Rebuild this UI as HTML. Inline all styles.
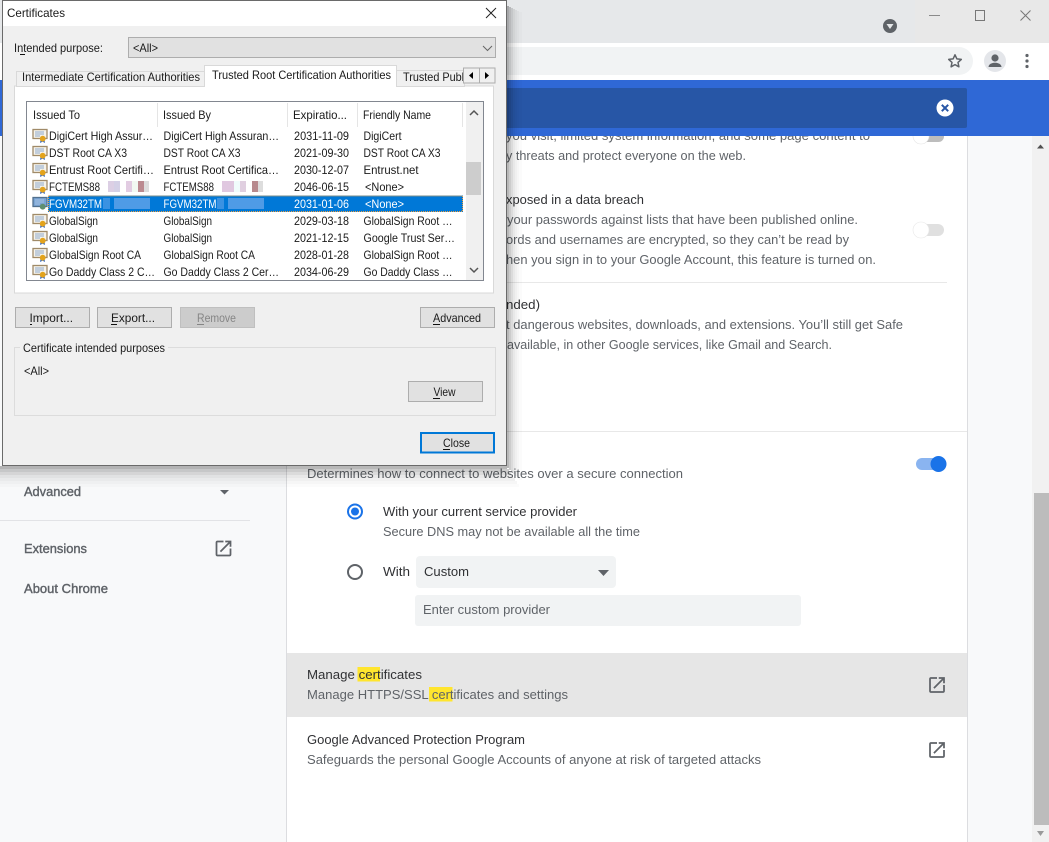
<!DOCTYPE html>
<html lang="en">
<head>
<meta charset="utf-8">
<title>Certificates</title>
<style>
html,body{margin:0;padding:0;width:1049px;height:842px;overflow:hidden;background:#f8f9fa}
svg{display:block;position:absolute;left:0;top:0}
text{white-space:pre}
.c{font:13px "Liberation Sans",sans-serif;fill:#5f6368}
.p{font:13px "Liberation Sans",sans-serif;fill:#303134}
.n{font:13px "Liberation Sans",sans-serif;fill:#5f6368;stroke:#5f6368;stroke-width:.4}
.d{font:12px "Liberation Sans",sans-serif;fill:#1a1a1a}
.w{font:12px "Liberation Sans",sans-serif;fill:#fff}
</style>
</head>
<body>
<svg width="1049" height="842" viewBox="0 0 1049 842" xmlns="http://www.w3.org/2000/svg">
<defs>
<clipPath id="tab3"><rect x="398" y="66" width="65" height="20"/></clipPath>
<g id="cert">
<rect x="33" y="-6.500" width="14" height="9" fill="#f6f3ea" stroke="#a08a68" stroke-width="1.300"/>
<path d="M35 -4h9M35 -2h9M35 0h5" stroke="#8fa8cc" stroke-width="1" fill="none"/>
<path d="M40.500 3.500l-.5 3.500 2.500-1.300L45 7l-.5-3.500z" fill="#3f6fc0"/>
<circle cx="42.700" cy="2.700" r="2.900" fill="#e3a31c"/>
</g>
<g id="certs">
<rect x="33" y="-6.500" width="14" height="9" fill="#7aa5d4" stroke="#52708e" stroke-width="1.300"/>
<path d="M35 -4h9M35 -2h9M35 0h5" stroke="#a8c4e4" stroke-width="1" fill="none"/>
<circle cx="42.700" cy="2.700" r="2.900" fill="#5f8f70"/>
</g>
<path id="ext" d="M19 19H5V5h7V3H5c-1.110 0-2 .9-2 2v14c0 1.100.89 2 2 2h14c1.100 0 2-.9 2-2v-7h-2v7zM14 3v2h3.590l-9.830 9.830 1.410 1.410L19 6.410V10h2V3h-7z" fill="#5f6368"/>
</defs>

<!-- browser chrome -->
<rect width="1049" height="842" fill="#f8f9fa"/>
<rect width="1049" height="43" fill="#e6e8ea"/>
<rect x="915" width="134" height="43" fill="#e8e8e8"/>
<circle cx="890" cy="26" r="7" fill="#5f6368"/>
<path d="M886.500 24h7L890 29z" fill="#e6e8ea"/>
<rect x="929" y="15" width="11" height="1" fill="#8a8a8a"/>
<rect x="975.500" y="10.500" width="9" height="10" fill="none" stroke="#777"/>
<path d="M1020.500 10.500l10 10M1030.500 10.500l-10 10" stroke="#777" fill="none"/>
<rect y="43" width="1049" height="37" fill="#fff"/>
<rect x="300" y="47" width="673" height="28" rx="14" fill="#f1f3f4"/>
<path d="M955 54.800l1.900 4.100 4.400.5-3.300 3 .9 4.400-3.900-2.200-3.900 2.200.9-4.400-3.300-3 4.400-.5z" fill="none" stroke="#5f6368" stroke-width="1.500" stroke-linejoin="round"/>
<circle cx="995" cy="61" r="11" fill="#e4e6ea"/>
<circle cx="995" cy="58" r="3.600" fill="#5f6368"/>
<path d="M988.500 67c0-3 3.500-4.300 6.500-4.300s6.500 1.300 6.500 4.300z" fill="#5f6368"/>
<circle cx="1027" cy="55.500" r="1.600" fill="#5f6368"/><circle cx="1027" cy="61" r="1.600" fill="#5f6368"/><circle cx="1027" cy="66.500" r="1.600" fill="#5f6368"/>

<!-- page -->
<rect x="0" y="136" width="286" height="706" fill="#f8f9fa"/>
<rect x="286" y="100" width="682" height="742" fill="#dcdde0"/>
<rect x="287" y="100" width="680" height="742" fill="#fff"/>
<rect x="1032" y="136" width="17" height="706" fill="#f1f1f1"/>
<rect x="1034" y="493" width="15" height="332" fill="#bcbcbc"/>
<path d="M1037 148.500h7l-3.500-4z" fill="#505050"/>
<path d="M1037 831h7l-3.500 5z" fill="#9a9a9a"/>

<text class="c" x="506" y="140" textLength="364" lengthAdjust="spacingAndGlyphs">you visit, limited system information, and some page content to</text>
<rect x="916" y="131" width="28" height="11" rx="5.500" fill="#bdbdbd"/>
<circle cx="921" cy="136" r="8" fill="#fff" stroke="#e4e4e4" stroke-width=".6"/>
<text class="c" x="506" y="160" textLength="240" lengthAdjust="spacingAndGlyphs">y threats and protect everyone on the web.</text>
<text class="p" x="506" y="204" textLength="138" lengthAdjust="spacingAndGlyphs">xposed in a data breach</text>
<text class="c" x="507" y="224" textLength="351" lengthAdjust="spacingAndGlyphs">your passwords against lists that have been published online.</text>
<text class="c" x="506" y="244" textLength="343" lengthAdjust="spacingAndGlyphs">ords and usernames are encrypted, so they can’t be read by</text>
<text class="c" x="506" y="264" textLength="370" lengthAdjust="spacingAndGlyphs">hen you sign in to your Google Account, this feature is turned on.</text>
<rect x="916" y="224" width="28" height="12" rx="6" fill="#e0e0e0"/>
<circle cx="921" cy="230" r="8" fill="#fff" stroke="#e8e8e8" stroke-width=".6"/>
<rect x="500" y="282" width="447" height="1" fill="#e8e8e8"/>
<text class="p" x="506" y="309" textLength="34" lengthAdjust="spacingAndGlyphs">nded)</text>
<text class="c" x="506" y="329" textLength="397" lengthAdjust="spacingAndGlyphs">t dangerous websites, downloads, and extensions. You’ll still get Safe</text>
<text class="c" x="507" y="349" textLength="325" lengthAdjust="spacingAndGlyphs">available, in other Google services, like Gmail and Search.</text>
<rect x="287" y="431" width="680" height="1" fill="#e8e8e8"/>

<text class="c" x="307" y="478" textLength="376" lengthAdjust="spacingAndGlyphs">Determines how to connect to websites over a secure connection</text>
<rect x="916" y="458" width="28" height="12" rx="6" fill="#8ab4f0"/>
<circle cx="938.500" cy="464" r="8" fill="#1a73e8"/>

<circle cx="355" cy="511.500" r="7" fill="none" stroke="#1a73e8" stroke-width="2"/>
<circle cx="355" cy="511.500" r="4" fill="#1a73e8"/>
<text class="p" x="383" y="516" textLength="194" lengthAdjust="spacingAndGlyphs">With your current service provider</text>
<text class="c" x="383" y="536" textLength="257" lengthAdjust="spacingAndGlyphs">Secure DNS may not be available all the time</text>
<circle cx="355" cy="572" r="7" fill="none" stroke="#5f6368" stroke-width="2"/>
<text class="p" x="383" y="576" textLength="27" lengthAdjust="spacingAndGlyphs">With</text>
<rect x="416" y="556" width="200" height="32" rx="4" fill="#f1f3f4"/>
<text class="p" x="424" y="576" textLength="45" lengthAdjust="spacingAndGlyphs">Custom</text>
<path d="M598 570h11l-5.500 6z" fill="#5f6368"/>
<rect x="415" y="595" width="386" height="31" rx="3" fill="#f1f3f4"/>
<text class="c" x="423" y="614" textLength="127" lengthAdjust="spacingAndGlyphs">Enter custom provider</text>

<rect x="287" y="653" width="680" height="64" fill="#e6e6e6"/>
<rect x="357.500" y="667" width="22.500" height="14.500" fill="#ffe52e"/>
<rect x="429" y="687" width="23.500" height="14.500" fill="#ffe52e"/>
<text class="p" x="307" y="679" textLength="115" lengthAdjust="spacingAndGlyphs">Manage certificates</text>
<text class="c" x="307" y="699" textLength="261" lengthAdjust="spacingAndGlyphs">Manage HTTPS/SSL certificates and settings</text>
<use href="#ext" transform="translate(926.500 674.500) scale(.875)"/>
<text class="p" x="307" y="744" textLength="218" lengthAdjust="spacingAndGlyphs">Google Advanced Protection Program</text>
<text class="c" x="307" y="764" textLength="454" lengthAdjust="spacingAndGlyphs">Safeguards the personal Google Accounts of anyone at risk of targeted attacks</text>
<use href="#ext" transform="translate(926.500 739.500) scale(.875)"/>

<!-- sidebar -->
<text class="n" x="24" y="496" textLength="57" lengthAdjust="spacingAndGlyphs">Advanced</text>
<path d="M220 490h9l-4.500 4.500z" fill="#5f6368"/>
<rect y="520" width="250" height="1" fill="#e2e3e6"/>
<text class="n" x="24" y="553" textLength="63" lengthAdjust="spacingAndGlyphs">Extensions</text>
<use href="#ext" transform="translate(213 538) scale(.875)"/>
<text class="n" x="24" y="593" textLength="84" lengthAdjust="spacingAndGlyphs">About Chrome</text>

<!-- blue search band -->
<rect y="80" width="1049" height="56" fill="#2f68d6"/>
<rect x="300" y="88" width="667" height="40" rx="2" fill="#2756a6"/>
<circle cx="945" cy="108" r="8.500" fill="#fff"/>
<path d="M941.800 104.800l6.400 6.400M948.200 104.800l-6.400 6.400" stroke="#2756a6" stroke-width="2" fill="none"/>

<!-- dialog shadow: stepped strips -->
<g fill="#000">
<rect x="507" y="6" width="2" height="462" fill-opacity=".28"/>
<rect x="509" y="7" width="2" height="463" fill-opacity=".2"/>
<rect x="511" y="8" width="2" height="464" fill-opacity=".14"/>
<rect x="513" y="9" width="2" height="465" fill-opacity=".09"/>
<rect x="515" y="10" width="2" height="466" fill-opacity=".06"/>
<rect x="517" y="11" width="2" height="467" fill-opacity=".035"/>
<rect x="519" y="12" width="3" height="468" fill-opacity=".015"/>
<rect x="0" y="466" width="507" height="3" fill-opacity=".28"/>
<rect x="0" y="469" width="509" height="3" fill-opacity=".2"/>
<rect x="0" y="472" width="511" height="3" fill-opacity=".14"/>
<rect x="0" y="475" width="513" height="3" fill-opacity=".09"/>
<rect x="0" y="478" width="515" height="3" fill-opacity=".06"/>
<rect x="0" y="481" width="517" height="3" fill-opacity=".035"/>
<rect x="0" y="484" width="519" height="3" fill-opacity=".015"/>
</g>

<!-- dialog -->
<rect x="2.500" y=".5" width="504" height="465" fill="#f0f0f0" stroke="#6a6a6a"/>
<rect x="3" y="1" width="503" height="25" fill="#fff"/>
<text class="d" x="7" y="17" textLength="58" lengthAdjust="spacingAndGlyphs">Certificates</text>
<path d="M486 8l10 10M496 8l-10 10" stroke="#222" fill="none"/>

<text class="d" x="14" y="52" textLength="89" lengthAdjust="spacingAndGlyphs">Intended purpose:</text>
<rect x="20" y="54" width="5" height="1" fill="#111"/>
<rect x="128.500" y="37.500" width="367" height="20" fill="#e1e1e1" stroke="#adadad"/>
<text class="d" x="133" y="52" textLength="25" lengthAdjust="spacingAndGlyphs">&lt;All&gt;</text>
<path d="M483 46l4.500 4.500L492 46" fill="none" stroke="#666"/>

<!-- tabs -->
<rect x="14.500" y="86" width="479" height="207" fill="#fff" stroke="#d9d9d9"/>
<rect x="16.500" y="71.500" width="188" height="15" fill="#f0f0f0" stroke="#d9d9d9"/>
<text class="d" x="22" y="81" textLength="178" lengthAdjust="spacingAndGlyphs">Intermediate Certification Authorities</text>
<rect x="396.500" y="70.500" width="68" height="16" fill="#f0f0f0" stroke="#d9d9d9"/>
<text class="d" x="403" y="81" textLength="90" lengthAdjust="spacingAndGlyphs" clip-path="url(#tab3)">Trusted Publishers</text>
<path d="M204.500 87V65.500h192V87" fill="#fff" stroke="#d9d9d9"/>
<rect x="205" y="85" width="191" height="3" fill="#fff"/>
<text class="d" x="212" y="79" textLength="179" lengthAdjust="spacingAndGlyphs">Trusted Root Certification Authorities</text>
<rect x="463.500" y="68" width="16" height="15" fill="#f0f0f0" stroke="#adadad"/>
<rect x="479.500" y="68" width="15.500" height="15" fill="#f0f0f0" stroke="#adadad"/>
<path d="M473 72v7l-4-3.500z" fill="#000"/>
<path d="M485 72v7l4-3.500z" fill="#000"/>

<!-- list -->
<rect x="26.500" y="101.500" width="457" height="179" fill="#fff" stroke="#828790"/>
<rect x="157" y="103" width="1" height="24" fill="#e5e5e5"/>
<rect x="287" y="103" width="1" height="24" fill="#e5e5e5"/>
<rect x="357" y="103" width="1" height="24" fill="#e5e5e5"/>
<rect x="462" y="103" width="1" height="24" fill="#e5e5e5"/>
<text class="d" x="33" y="119" textLength="47" lengthAdjust="spacingAndGlyphs">Issued To</text>
<text class="d" x="163" y="119" textLength="48" lengthAdjust="spacingAndGlyphs">Issued By</text>
<text class="d" x="293" y="119" textLength="54" lengthAdjust="spacingAndGlyphs">Expiratio...</text>
<text class="d" x="363" y="119" textLength="68" lengthAdjust="spacingAndGlyphs">Friendly Name</text>
<rect x="466" y="102" width="17" height="178" fill="#f0f0f0"/>
<rect x="466" y="162" width="15" height="33" fill="#cdcdcd"/>
<path d="M470 115l4-4 4 4M470 268l4 4 4-4" fill="none" stroke="#555" stroke-width="1.500"/>

<use href="#cert" y="136"/>
<text class="d" x="49" y="140" textLength="104" lengthAdjust="spacingAndGlyphs">DigiCert High Assur…</text>
<text class="d" x="163.500" y="140" textLength="115.500" lengthAdjust="spacingAndGlyphs">DigiCert High Assuran…</text>
<text class="d" x="294" y="140" textLength="55" lengthAdjust="spacingAndGlyphs">2031-11-09</text>
<text class="d" x="363.500" y="140" textLength="38" lengthAdjust="spacingAndGlyphs">DigiCert</text>

<use href="#cert" y="153"/>
<text class="d" x="49" y="157" textLength="78" lengthAdjust="spacingAndGlyphs">DST Root CA X3</text>
<text class="d" x="163.500" y="157" textLength="77" lengthAdjust="spacingAndGlyphs">DST Root CA X3</text>
<text class="d" x="294" y="157" textLength="55" lengthAdjust="spacingAndGlyphs">2021-09-30</text>
<text class="d" x="363.500" y="157" textLength="77" lengthAdjust="spacingAndGlyphs">DST Root CA X3</text>

<use href="#cert" y="170"/>
<text class="d" x="49" y="174" textLength="105" lengthAdjust="spacingAndGlyphs">Entrust Root Certifi…</text>
<text class="d" x="163.500" y="174" textLength="115.500" lengthAdjust="spacingAndGlyphs">Entrust Root Certifica…</text>
<text class="d" x="294" y="174" textLength="55" lengthAdjust="spacingAndGlyphs">2030-12-07</text>
<text class="d" x="363.500" y="174" textLength="55" lengthAdjust="spacingAndGlyphs">Entrust.net</text>

<use href="#cert" y="187"/>
<text class="d" x="49" y="191" textLength="51" lengthAdjust="spacingAndGlyphs">FCTEMS88</text>
<rect x="108" y="181" width="6" height="11" fill="#dccfe4"/><rect x="114" y="181" width="6" height="11" fill="#d4d0e6"/>
<rect x="126" y="181" width="6" height="11" fill="#e2cce2"/><rect x="132" y="181" width="6" height="11" fill="#f2f9f2"/>
<rect x="138" y="181" width="6" height="11" fill="#bb8a90"/><rect x="144" y="181" width="5" height="11" fill="#dddddd"/>
<text class="d" x="163.500" y="191" textLength="50.500" lengthAdjust="spacingAndGlyphs">FCTEMS88</text>
<rect x="222" y="181" width="12" height="11" fill="#e0c8e0"/><rect x="234" y="181" width="6" height="11" fill="#f0fcfc"/>
<rect x="240" y="181" width="6" height="11" fill="#e0cfe0"/>
<rect x="252" y="181" width="6" height="11" fill="#b88a8e"/><rect x="258" y="181" width="5" height="11" fill="#dddddd"/>
<text class="d" x="294" y="191" textLength="55" lengthAdjust="spacingAndGlyphs">2046-06-15</text>
<text class="d" x="365" y="191" textLength="39" lengthAdjust="spacingAndGlyphs">&lt;None&gt;</text>

<use href="#certs" y="204"/>
<rect x="48" y="195.500" width="415" height="16.500" fill="#0078d7"/>
<rect x="48.500" y="196" width="414" height="15.500" fill="none" stroke="#f0a040" stroke-dasharray="1 1"/>
<text class="w" x="49" y="208" textLength="53" lengthAdjust="spacingAndGlyphs">FGVM32TM</text>
<rect x="103" y="198" width="7" height="11" fill="#3a92e2"/><rect x="114" y="198" width="36" height="11" fill="#4f9be6"/>
<text class="w" x="163.500" y="208" textLength="53" lengthAdjust="spacingAndGlyphs">FGVM32TM</text>
<rect x="217" y="198" width="7" height="11" fill="#3a92e2"/><rect x="228" y="198" width="36" height="11" fill="#4f9be6"/>
<text class="w" x="294" y="208" textLength="55" lengthAdjust="spacingAndGlyphs">2031-01-06</text>
<text class="w" x="365" y="208" textLength="39" lengthAdjust="spacingAndGlyphs">&lt;None&gt;</text>

<use href="#cert" y="221"/>
<text class="d" x="49" y="225" textLength="49" lengthAdjust="spacingAndGlyphs">GlobalSign</text>
<text class="d" x="163.500" y="225" textLength="48.500" lengthAdjust="spacingAndGlyphs">GlobalSign</text>
<text class="d" x="294" y="225" textLength="55" lengthAdjust="spacingAndGlyphs">2029-03-18</text>
<text class="d" x="363.500" y="225" textLength="89" lengthAdjust="spacingAndGlyphs">GlobalSign Root …</text>

<use href="#cert" y="238"/>
<text class="d" x="49" y="242" textLength="49" lengthAdjust="spacingAndGlyphs">GlobalSign</text>
<text class="d" x="163.500" y="242" textLength="48.500" lengthAdjust="spacingAndGlyphs">GlobalSign</text>
<text class="d" x="294" y="242" textLength="55" lengthAdjust="spacingAndGlyphs">2021-12-15</text>
<text class="d" x="363.500" y="242" textLength="91.500" lengthAdjust="spacingAndGlyphs">Google Trust Ser…</text>

<use href="#cert" y="255"/>
<text class="d" x="49" y="259" textLength="92" lengthAdjust="spacingAndGlyphs">GlobalSign Root CA</text>
<text class="d" x="163.500" y="259" textLength="91.500" lengthAdjust="spacingAndGlyphs">GlobalSign Root CA</text>
<text class="d" x="294" y="259" textLength="55" lengthAdjust="spacingAndGlyphs">2028-01-28</text>
<text class="d" x="363.500" y="259" textLength="89" lengthAdjust="spacingAndGlyphs">GlobalSign Root …</text>

<use href="#cert" y="272"/>
<text class="d" x="49" y="276" textLength="106" lengthAdjust="spacingAndGlyphs">Go Daddy Class 2 C…</text>
<text class="d" x="163.500" y="276" textLength="115.500" lengthAdjust="spacingAndGlyphs">Go Daddy Class 2 Cer…</text>
<text class="d" x="294" y="276" textLength="55" lengthAdjust="spacingAndGlyphs">2034-06-29</text>
<text class="d" x="363.500" y="276" textLength="89" lengthAdjust="spacingAndGlyphs">Go Daddy Class …</text>

<!-- buttons -->
<rect x="15.500" y="307.500" width="74" height="20" fill="#e1e1e1" stroke="#adadad"/>
<text class="d" x="29.500" y="322" textLength="43.500" lengthAdjust="spacingAndGlyphs">Import...</text>
<rect x="30" y="324" width="2" height="1" fill="#111"/>
<rect x="97.500" y="307.500" width="74" height="20" fill="#e1e1e1" stroke="#adadad"/>
<text class="d" x="111" y="322" textLength="44" lengthAdjust="spacingAndGlyphs">Export...</text>
<rect x="111" y="324" width="6" height="1" fill="#111"/>
<rect x="180.500" y="307.500" width="74" height="20" fill="#cccccc" stroke="#bfbfbf"/>
<text class="d" style="fill:#858585" x="197" y="322" textLength="39" lengthAdjust="spacingAndGlyphs">Remove</text>
<rect x="197" y="324" width="7" height="1" fill="#858585"/>
<rect x="420.500" y="307.500" width="74" height="20" fill="#e1e1e1" stroke="#adadad"/>
<text class="d" x="433" y="322" textLength="48" lengthAdjust="spacingAndGlyphs">Advanced</text>
<rect x="433" y="324" width="7" height="1" fill="#111"/>

<rect x="14.500" y="347.500" width="481" height="68" fill="none" stroke="#dcdcdc"/>
<rect x="20" y="342" width="148" height="12" fill="#f0f0f0"/>
<text class="d" x="23" y="352" textLength="142" lengthAdjust="spacingAndGlyphs">Certificate intended purposes</text>
<text class="d" x="24" y="375" textLength="25" lengthAdjust="spacingAndGlyphs">&lt;All&gt;</text>
<rect x="408.500" y="381.500" width="74" height="20" fill="#e1e1e1" stroke="#adadad"/>
<text class="d" x="433.500" y="396" textLength="22" lengthAdjust="spacingAndGlyphs">View</text>
<rect x="433" y="398" width="7" height="1" fill="#111"/>
<rect x="421" y="433" width="73" height="19.500" fill="#e1e1e1" stroke="#0078d7" stroke-width="2"/>
<text class="d" x="443" y="447" textLength="27" lengthAdjust="spacingAndGlyphs">Close</text>
<rect x="443" y="449" width="7" height="1" fill="#111"/>
</svg>
</body>
</html>
